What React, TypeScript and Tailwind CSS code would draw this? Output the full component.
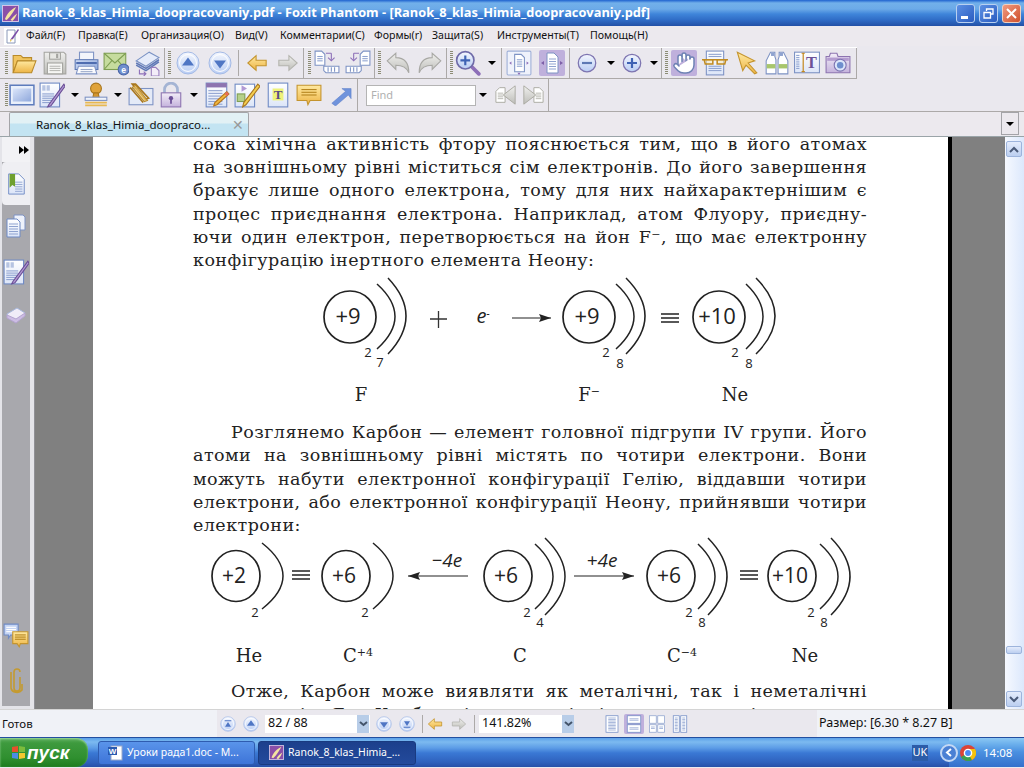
import type { ReactNode } from "react";
import { Hand } from "lucide-react";

const Ic = ({ s = 26, children }: { s?: number; children: ReactNode }) => (
  <svg width={s} height={s} viewBox="0 0 24 24" className="block shrink-0">{children}</svg>
);

const Defs = () => (
  <svg width="0" height="0" className="block h-0 w-0">
    <defs>
      <linearGradient id="amber" x1="0" y1="0" x2="0" y2="1"><stop offset="0" stopColor="#FFE9A0" /><stop offset="1" stopColor="#EDB445" /></linearGradient>
      <linearGradient id="ball" x1="0" y1="0" x2="0" y2="1"><stop offset="0" stopColor="#F4F7FE" /><stop offset="1" stopColor="#B9CDF4" /></linearGradient>
      <linearGradient id="blue" x1="0" y1="0" x2="1" y2="1"><stop offset="0" stopColor="#DCE6FA" /><stop offset="1" stopColor="#8FA8DC" /></linearGradient>
      <linearGradient id="doc" x1="0" y1="0" x2="0" y2="1"><stop offset="0" stopColor="#FFFFFF" /><stop offset="1" stopColor="#DCE5F8" /></linearGradient>
      <linearGradient id="grey" x1="0" y1="0" x2="0" y2="1"><stop offset="0" stopColor="#F0F0EE" /><stop offset="1" stopColor="#BDBDB8" /></linearGradient>
      <linearGradient id="lilac" x1="0" y1="0" x2="0" y2="1"><stop offset="0" stopColor="#F3EEF8" /><stop offset="1" stopColor="#C4B2DC" /></linearGradient>
    </defs>
  </svg>
);

const Lines = ({ x, y, w, n, c = "#8FA3D0", d = 2 }: { x: number; y: number; w: number; n: number; c?: string; d?: number }) => (
  <>
    {Array.from({ length: n }).map((_, i) => (
      <path key={i} d={`M${x} ${y + i * d}h${w}`} stroke={c} strokeWidth="1" />
    ))}
  </>
);

const Folder = () => (
  <Ic>
    <path d="M2 21V5h7l2 2h8v3H6L2 21z" fill="#F1C45F" stroke="#B98A2A" />
    <path d="M2 21l4-11h17l-4 11z" fill="url(#amber)" stroke="#B98A2A" />
  </Ic>
);
const Save = () => (
  <Ic>
    <path d="M2 2h18l2 2v18H2z" fill="url(#grey)" stroke="#A4A4A0" />
    <rect x="7" y="2.5" width="10" height="6" fill="#E8E8E4" stroke="#A4A4A0" />
    <rect x="13" y="3.5" width="2" height="4" fill="#A4A4A0" />
    <rect x="5" y="12" width="14" height="10" fill="#F6F6F4" stroke="#A4A4A0" />
    <Lines x={7} y={15} w={10} n={3} c="#B8B8B4" />
  </Ic>
);
const Printer = () => (
  <Ic>
    <rect x="6" y="2" width="13" height="7" fill="#F3F5FB" stroke="#7E93C4" />
    <path d="M2 9h21v9H2z" fill="url(#blue)" stroke="#5C78B4" />
    <path d="M3 12h19" stroke="#4E6CB0" strokeWidth="2" />
    <path d="M5 15h15l2 7H3z" fill="#FBFBFD" stroke="#7E93C4" />
    <Lines x={7} y={18} w={11} n={2} c="#9AA8C8" />
  </Ic>
);
const Mail = () => (
  <Ic>
    <rect x="1" y="3" width="20" height="15" fill="#C6DC9E" stroke="#7E9E52" />
    <path d="M1 3l10 9 10-9M1 18l7-8M21 18l-7-8" fill="none" stroke="#7E9E52" />
    <circle cx="19" cy="18" r="5" fill="#6F8FCE" stroke="#4A66A8" />
    <text x="19" y="21" fontSize="8" fontWeight="700" textAnchor="middle" fill="#fff" fontFamily="Liberation Sans, sans-serif">e</text>
  </Ic>
);
const Scan = () => (
  <Ic>
    <path d="M2 10L14 2l9 5-12 8z" fill="#E6ECFA" stroke="#7A92C4" />
    <path d="M2 12l9 5 12-8M2 14l9 5 12-8" fill="none" stroke="#5E78B6" strokeWidth="1.4" />
    <path d="M5 18v4h6M9 20l2 2-2 2" fill="none" stroke="#8D6FB8" />
    <path d="M16 16h4l3 3v5h-7z" fill="#F3EDF8" stroke="#9A80BE" />
  </Ic>
);
const Ball = ({ dir, small }: { dir: "up" | "down" | "first" | "last"; small?: boolean }) => (
  <Ic s={small ? 16 : 24}>
    <circle cx="12" cy="12" r="11" fill="url(#ball)" stroke="#A4BAE6" />
    <circle cx="12" cy="12" r="8.4" fill="none" stroke="#fff" />
    {dir === "up" && <path d="M12 6.5l6 8H6z" fill="#4F76C4" />}
    {dir === "down" && <path d="M12 17.5l6-8H6z" fill="#4F76C4" />}
    {dir === "first" && <path d="M7 6.5h10v1.5H7zM12 9l4.500 7h-9z" fill="#4F76C4" />}
    {dir === "last" && <path d="M7 16h10v1.500H7zM12 15l4.500-7h-9z" fill="#4F76C4" />}
  </Ic>
);
const ArrowH = ({ right, on, s = 22 }: { right?: boolean; on?: boolean; s?: number }) => (
  <Ic s={s}>
    <path
      d={right ? "M2 9h11V4l9 8-9 8v-5H2z" : "M22 9H11V4l-9 8 9 8v-5h11z"}
      fill={on ? "url(#amber)" : "url(#grey)"}
      stroke={on ? "#C4942E" : "#B4B4AE"}
      strokeWidth="1.2"
    />
  </Ic>
);
const FindNav = ({ right }: { right?: boolean }) => (
  <Ic s={22}>
    <g transform={right ? undefined : "translate(24 0) scale(-1 1)"}>
      <path d="M13 4h6l4 4v12H13z" fill="#fff" stroke="#A8A8A0" />
      <Lines x={15} y={10} w={6} n={4} c="#B4B4AC" />
      <path d="M2 2l13 10L2 22z" fill="url(#grey)" stroke="#A8A8A0" />
    </g>
  </Ic>
);
const Extract = ({ flip }: { flip?: boolean }) => (
  <Ic>
    <g transform={flip ? "translate(24 0) scale(-1 1)" : undefined}>
      <path d="M1 1h6l3 3v10H1z" fill="#fff" stroke="#7E93C4" />
      <Lines x={3} y={6} w={5} n={3} />
      <path d="M16 3v6M13 7l3 3 3-3M11 3h5" fill="none" stroke="#8D6FB8" />
      <path d="M9 15h14v6H11l-2-2z" fill="#fff" stroke="#7E93C4" />
      <path d="M13 16v4M16 16v4M19 16v4" stroke="#7E93C4" />
    </g>
  </Ic>
);
const Undo = ({ right }: { right?: boolean }) => (
  <Ic>
    <g transform={right ? "translate(24 0) scale(-1 1)" : undefined}>
      <path d="M2 10l8-7v4c8 0 12 5 12 14-2-5-6-7-12-7v4z" fill="url(#grey)" stroke="#A8A8A4" />
    </g>
  </Ic>
);
const ZoomIn = () => (
  <Ic>
    <path d="M15 15l7 7" stroke="#8D6FB8" strokeWidth="3.400" strokeLinecap="round" />
    <circle cx="9.500" cy="9.500" r="8" fill="url(#ball)" stroke="#6E6AA8" strokeWidth="1.500" />
    <path d="M5 9.500h9M9.500 5v9" stroke="#3E62B4" strokeWidth="2" />
  </Ic>
);
const FitPage = () => (
  <Ic>
    <rect x="1" y="1" width="22" height="22" rx="1" fill="#EFF2FB" stroke="#9FB0D8" />
    <path d="M8 4h6l3 3v13H8z" fill="#fff" stroke="#7E93C4" />
    <Lines x={10} y={9} w={5} n={4} />
    <path d="M3 12l2-1.500v3zM21 12l-2-1.500v3z" fill="#8D6FB8" />
    <path d="M12 23l-1.500-2h3z" fill="#8D6FB8" />
  </Ic>
);
const WidthPage = () => (
  <Ic s={24}>
    <path d="M7 2h7l4 4v16H7z" fill="#fff" stroke="#7E93C4" />
    <Lines x={9} y={8} w={7} n={5} d={2.500} />
    <path d="M1 12l3-2v4zM23 12l-3-2v4z" fill="#7D5FA8" />
  </Ic>
);
const RoundOp = ({ plus }: { plus?: boolean }) => (
  <Ic s={20}>
    <circle cx="12" cy="12" r="10.500" fill="url(#ball)" stroke="#7D74B0" strokeWidth="1.500" />
    <path d={plus ? "M6 12h12M12 6v12" : "M6 12h12"} stroke={plus ? "#3E62B4" : "#5C78B4"} strokeWidth="2.600" />
  </Ic>
);
const Glasses = () => (
  <Ic>
    <rect x="4" y="1" width="16" height="22" fill="url(#doc)" stroke="#7E93C4" />
    <Lines x={6} y={4} w={12} n={2} c="#8FA3D0" d={2} />
    <Lines x={6} y={15} w={12} n={3} c="#8FA3D0" d={2} />
    <path d="M0 9h24" stroke="#C08A1E" strokeWidth="1.400" />
    <path d="M2 9h8v4H3zM14 9h8l-1 4h-7z" fill="#F9E8B4" fillOpacity=".5" stroke="#C08A1E" strokeWidth="1.400" />
  </Ic>
);
const Pointer = () => (
  <Ic>
    <path d="M4 2l16 8-6 2 8 9-2 1-8-8-3 5z" fill="url(#amber)" stroke="#C4942E" />
  </Ic>
);
const Binoculars = () => (
  <Ic>
    <path d="M6 2h4v4l1 3v13H2V10z" fill="#fff" stroke="#7E93C4" />
    <path d="M14 2h4l4 8v12h-9V9l1-3z" fill="#fff" stroke="#7E93C4" />
    <rect x="2.500" y="13" width="8" height="4" fill="#A8C66C" />
    <rect x="13.500" y="13" width="8" height="4" fill="#A8C66C" />
    <rect x="6.500" y="2.500" width="3" height="3" fill="#8FA3D0" />
    <rect x="14.500" y="2.500" width="3" height="3" fill="#8FA3D0" />
  </Ic>
);
const TextSel = () => (
  <Ic>
    <rect x="0.500" y="2" width="23" height="19" fill="url(#doc)" stroke="#7E93C4" />
    <Lines x={2} y={5} w={3} n={7} d={2} />
    <path d="M7 3h3M7 20h3M8.500 3v17" stroke="#C4881E" strokeWidth="1.100" fill="none" />
    <text x="16" y="17" fontSize="15" fontWeight="700" textAnchor="middle" fill="#6D5296" fontFamily="Liberation Serif, serif">T</text>
  </Ic>
);
const Camera = () => (
  <Ic>
    <path d="M1 6h3l1-3h6l1 3h11v15H1z" fill="url(#lilac)" stroke="#8D74B0" />
    <rect x="2" y="7" width="20" height="3" fill="#B49CD0" />
    <circle cx="14" cy="14" r="5.500" fill="#DCE6FA" stroke="#7D74B0" />
    <circle cx="14" cy="14" r="3" fill="#6F8FCE" />
  </Ic>
);
const Screen = () => (
  <Ic>
    <rect x="1" y="3" width="22" height="18" fill="#EAF0FB" stroke="#5E7CBC" strokeWidth="1.400" />
    <rect x="3.500" y="6" width="17" height="12" fill="url(#blue)" />
  </Ic>
);
const DocPen = () => (
  <Ic>
    <rect x="1" y="1" width="18" height="22" fill="url(#doc)" stroke="#6F8AC4" />
    <rect x="3" y="3" width="3" height="5" fill="#B6C4E2" />
    <rect x="7" y="3" width="3" height="5" fill="#B6C4E2" />
    <Lines x={3} y={11} w={11} n={5} />
    <path d="M23 2L9 21l-1 2 3-1L24 4z" fill="#B29AD4" stroke="#6A4E96" />
  </Ic>
);
const Stamp = () => (
  <Ic>
    <circle cx="12" cy="6" r="5" fill="#E0A33A" stroke="#A8761E" />
    <path d="M10 10h4l1 5H9z" fill="#D4952E" stroke="#A8761E" />
    <rect x="2" y="14" width="20" height="3" fill="#F0F3FA" stroke="#7E93C4" />
    <path d="M2 19h20M2 21.500h20" stroke="#E8B850" strokeWidth="1.600" />
  </Ic>
);
const Clips = () => (
  <Ic>
    <rect x="1" y="6" width="22" height="15" fill="#E4EAF7" stroke="#7E93C4" />
    <path d="M4 2l12 14 3-1L7 2zM2 5l12 14" fill="none" stroke="#A8761E" strokeWidth="1.500" />
    <path d="M7 3l11 14-3 1L4 5z" fill="#F0C868" fillOpacity=".7" stroke="#B98A2A" />
  </Ic>
);
const Lock = () => (
  <Ic>
    <path d="M6 11V7a6 6 0 0112 0v4" fill="none" stroke="#A4B4D4" strokeWidth="2.500" />
    <rect x="3" y="10" width="18" height="13" fill="url(#lilac)" stroke="#8D74B0" />
    <circle cx="12" cy="15" r="2" fill="#6A4E96" />
    <path d="M12 16v4" stroke="#6A4E96" strokeWidth="1.600" />
  </Ic>
);
const Note = () => (
  <Ic>
    <rect x="2" y="1" width="19" height="22" fill="url(#doc)" stroke="#6F8AC4" />
    <rect x="2" y="1" width="19" height="4" fill="#8D74B0" />
    <Lines x={4} y={8} w={13} n={6} d={2.500} />
    <path d="M21 9l2 2-11 10-3 1 1-3z" fill="#F0B83C" stroke="#B4741E" />
    <path d="M21 9l2 2-2 2-2-2z" fill="#E86A5A" />
  </Ic>
);
const Form = () => (
  <Ic>
    <rect x="1" y="2" width="18" height="21" fill="url(#doc)" stroke="#6F8AC4" />
    <rect x="3" y="11" width="7" height="7" fill="#B6D08A" stroke="#7E9E52" />
    <path d="M7 3l5 3-5 3z" fill="#B29AD4" />
    <path d="M22 2l2 2-13 17-3 2 1-4z" fill="#F4CE4E" stroke="#A8761E" />
  </Ic>
);
const TDoc = () => (
  <Ic>
    <rect x="3" y="1" width="18" height="22" fill="url(#doc)" stroke="#6F8AC4" />
    <rect x="7" y="6" width="10" height="11" fill="#EEF27A" />
    <text x="12" y="16" fontSize="12" fontWeight="700" textAnchor="middle" fill="#5A4A86" fontFamily="Liberation Serif, serif">T</text>
  </Ic>
);
const Speech = ({ s = 26 }: { s?: number }) => (
  <Ic s={s}>
    <path d="M1 3h22v14H13l-2 4-1-4H1z" fill="url(#amber)" stroke="#C4942E" />
    <Lines x={5} y={7} w={14} n={3} c="#B4841E" d={2.500} />
  </Ic>
);
const BlueArrow = () => (
  <Ic s={22}>
    <path d="M2 21L17 8l-4-3h10v11l-3-4L6 24z" fill="#6F93DC" stroke="#5E7FC8" strokeWidth=".6" />
  </Ic>
);
const Gem = () => (
  <svg width="24" height="24" viewBox="0 0 24 24" className="block">
    <path d="M3 11l10-6 8 5-9 9-8-4z" fill="#F0ECF8" stroke="#A8B8DC" />
    <path d="M3 15l9 5 9-7v-3l-9 6-9-4z" fill="#CDBDE4" stroke="#B4A4D0" />
  </svg>
);
const Caret = () => (
  <svg width="8" height="4" viewBox="0 0 8 4" className="block"><path d="M0 0h8L4 4z" fill="#000" /></svg>
);
const Grip = () => <div className="h-[24px] w-[3px] shrink-0 bg-[repeating-linear-gradient(to_bottom,#8C8C74_0_1px,#EAE8EE_1px_2px)]" />;
const Sep = () => <div className="h-[26px] w-px bg-[#ACA9A8]" />;

const AppLogo = ({ s = 17 }: { s?: number }) => (
  <svg width={s} height={s} viewBox="0 0 18 18" className="block shrink-0">
    <rect x=".5" y=".5" width="17" height="17" fill="#8A4FA8" stroke="#D8C8E8" />
    <path d="M3 15C6 8 9 5 15 2 12 7 10 11 5 16zM9 16c2-3 4-5 7-7-1 3-3 6-5 8z" fill="#F4E4A0" />
  </svg>
);

const Chevron = () => (
  <div className="flex h-full w-[12px] items-center justify-center bg-[#B8CDE8]">
    <svg width="9" height="6" viewBox="0 0 9 6"><path d="M1 1l3.500 3L8 1" fill="none" stroke="#44546A" strokeWidth="2" /></svg>
  </div>
);

const TitleBar = () => (
  <div className="flex h-[26px] shrink-0 items-center bg-[linear-gradient(to_bottom,#1F62CF_0,#72B0EA_3px,#6CAAE8_9px,#3F85DA_14px,#2F6CC6_20px,#2250A6_100%)] pl-[2px]">
    <AppLogo />
    <span className="ml-[3px] font-['Open_Sans',sans-serif] text-[12.800px] font-bold whitespace-nowrap text-white">
      Ranok_8_klas_Himia_doopracovaniy.pdf - Foxit Phantom - [Ranok_8_klas_Himia_doopracovaniy.pdf]
    </span>
    <div className="ml-auto flex gap-[4px] pr-[3px]">
      <div className="flex h-[19px] w-[19px] items-end rounded-[3px] border border-[#B8D0F0] bg-[linear-gradient(135deg,#5C90E4,#2A5CC0)] pb-[3px] pl-[4px]"><div className="h-[3px] w-[7px] bg-white" /></div>
      <div className="flex h-[19px] w-[19px] items-center justify-center rounded-[3px] border border-[#B8D0F0] bg-[linear-gradient(135deg,#5C90E4,#2A5CC0)]">
        <svg width="11" height="11" viewBox="0 0 11 11"><path d="M3.500 3V1h6.500v5H8M1 4.500h6.500v5.500H1z" fill="none" stroke="#fff" strokeWidth="1.300" /></svg>
      </div>
      <div className="flex h-[19px] w-[19px] items-center justify-center rounded-[3px] border border-[#F0D0C0] bg-[linear-gradient(135deg,#F09A80,#D0502C)]">
        <svg width="11" height="11" viewBox="0 0 11 11"><path d="M1 1l9 9M10 1l-9 9" stroke="#fff" strokeWidth="2" /></svg>
      </div>
    </div>
  </div>
);

const MenuBar = () => (
  <div className="flex h-[20px] shrink-0 items-center bg-[#ECE9EE] pl-[4px] font-['Noto_Sans',sans-serif] text-[10.600px] text-[#111]">
    <div className="flex h-[17px] w-[16px] items-center justify-center bg-white">
      <svg width="15" height="16" viewBox="0 0 15 16"><path d="M2 2h8v13H2z" fill="#fff" stroke="#8A98B8" /><path d="M13 1L5 12l3-1 6-9z" fill="#7C4FA8" /><path d="M5 12l3-1-3 3z" fill="#E8C860" /></svg>
    </div>
    <span className="ml-[6px] w-[52px]">Файл(F)</span>
    <span className="w-[63px]">Правка(E)</span>
    <span className="w-[94px]">Организация(O)</span>
    <span className="w-[45px]">Вид(V)</span>
    <span className="w-[94px]">Комментарии(C)</span>
    <span className="w-[58px]">Формы(r)</span>
    <span className="w-[65px]">Защита(S)</span>
    <span className="w-[93px]">Инструменты(T)</span>
    <span>Помощь(H)</span>
  </div>
);

const ToolbarOne = () => (
  <div className="flex h-[33px] shrink-0 bg-[#EAE8EE] pt-[1px]">
    <div className="flex h-[32px] border-t border-t-white border-b border-b-[#ACA9A8] items-center">
      <div className="flex h-full w-[165px] items-center border-r border-[#ACA9A8] pl-[5px]">
        <Grip />
        <div className="flex w-[32px] justify-center"><Folder /></div>
        <div className="flex w-[30px] justify-center"><Save /></div>
        <div className="flex w-[31px] justify-center"><Printer /></div>
        <div className="flex w-[29px] justify-center"><Mail /></div>
        <div className="flex w-[34px] justify-center"><Scan /></div>
      </div>
      <div className="flex h-full w-[139px] items-center border-r border-[#ACA9A8] pl-[3px]">
        <Grip />
        <div className="flex w-[33px] justify-center"><Ball dir="up" /></div>
        <div className="flex w-[31px] justify-center"><Ball dir="down" /></div>
        <div className="flex w-[6px] justify-center"><Sep /></div>
        <div className="flex w-[31px] justify-center"><ArrowH on /></div>
        <div className="flex w-[31px] justify-center"><ArrowH right /></div>
      </div>
      <div className="flex h-full w-[71px] items-center border-r border-[#ACA9A8] pl-[4px]">
        <Grip />
        <div className="flex w-[31px] justify-center"><Extract /></div>
        <div className="flex w-[32px] justify-center"><Extract flip /></div>
      </div>
      <div className="flex h-full w-[72px] items-center border-r border-[#ACA9A8] pl-[3px]">
        <Grip />
        <div className="flex w-[33px] justify-center"><Undo /></div>
        <div className="flex w-[32px] justify-center"><Undo right /></div>
      </div>
      <div className="flex h-full w-[55px] items-center border-r border-[#ACA9A8] pl-[3px]">
        <Grip />
        <div className="flex w-[30px] justify-center"><ZoomIn /></div>
        <div className="flex w-[18px] justify-center"><Caret /></div>
      </div>
      <div className="flex h-full w-[68px] items-center border-r border-[#ACA9A8]">
        <div className="flex w-[33px] justify-center"><FitPage /></div>
        <div className="flex w-[34px] justify-center">
          <div className="flex h-[26px] w-[26px] items-center justify-center rounded-[2px] bg-[#BFB0DC]"><WidthPage /></div>
        </div>
      </div>
      <div className="flex h-full w-[92px] items-center border-r border-[#ACA9A8]">
        <div className="flex w-[34px] justify-center"><RoundOp /></div>
        <div className="flex w-[14px] justify-center"><Caret /></div>
        <div className="flex w-[28px] justify-center"><RoundOp plus /></div>
        <div className="flex w-[15px] justify-center"><Caret /></div>
      </div>
      <div className="flex h-full w-[195px] items-center border-r border-[#ACA9A8] pl-[3px]">
        <Grip />
        <div className="ml-[3px] flex h-[26px] w-[26px] items-center justify-center rounded-[2px] bg-[#BFB0DC]">
          <Hand size={24} fill="#fff" stroke="#6E82B4" strokeWidth={1.5} />
        </div>
        <div className="ml-[2px] flex w-[31px] justify-center"><Glasses /></div>
        <div className="flex w-[31px] justify-center"><Pointer /></div>
        <div className="flex w-[31px] justify-center"><Binoculars /></div>
        <div className="flex w-[30px] justify-center"><TextSel /></div>
        <div className="flex w-[32px] justify-center"><Camera /></div>
      </div>
    </div>
  </div>
);

const ToolbarTwo = () => (
  <div className="flex h-[33px] shrink-0 items-center border-b border-[#ACA9A8] bg-[#EAE8EE]">
    <div className="flex h-full w-[358px] items-center border-r border-[#ACA9A8] pl-[5px]">
      <Grip />
      <div className="flex w-[29px] justify-center"><Screen /></div>
      <div className="flex w-[30px] justify-center"><DocPen /></div>
      <div className="flex w-[16px] justify-center"><Caret /></div>
      <div className="flex w-[26px] justify-center"><Stamp /></div>
      <div className="flex w-[18px] justify-center"><Caret /></div>
      <div className="flex w-[28px] justify-center"><Clips /></div>
      <div className="flex w-[32px] justify-center"><Lock /></div>
      <div className="flex w-[16px] justify-center"><Caret /></div>
      <div className="flex w-[29px] justify-center"><Note /></div>
      <div className="flex w-[31px] justify-center"><Form /></div>
      <div className="flex w-[31px] justify-center"><TDoc /></div>
      <div className="flex w-[31px] justify-center"><Speech /></div>
      <div className="flex w-[33px] justify-center"><BlueArrow /></div>
    </div>
    <div className="flex h-full w-[191px] items-center border-r border-[#ACA9A8] pl-[8px]">
      <div className="flex h-[21px] w-[110px] items-center border border-[#B4B4B4] bg-white pl-[4px] font-['Noto_Sans',sans-serif] text-[11px] text-[#B0B0B0]">Find</div>
      <div className="ml-[3px] w-[8px]"><Caret /></div>
      <div className="ml-[8px]"><FindNav /></div>
      <div className="ml-[5px]"><FindNav right /></div>
    </div>
  </div>
);

const TabBar = () => (
  <div className="flex h-[25px] shrink-0 items-end border-b border-[#9AA4A8] bg-[#ECE9EE] pl-[9px]">
    <div className="relative flex h-[24px] w-[240px] items-center rounded-t-[2px] border border-b-0 border-[#A4A4A8] bg-[linear-gradient(to_bottom,#E2F1F5_0,#E2F1F5_10px,#C3E4F2_11px)] pl-[26px] font-['Noto_Sans',sans-serif] text-[11.500px] text-[#111]">
      Ranok_8_klas_Himia_doopraco...
      <span className="absolute right-[4px] top-[5px] text-[14px] leading-none text-[#999]">✕</span>
    </div>
    <div className="mb-[1px] ml-auto mr-[5px] flex h-[23px] w-[18px] items-center justify-center border border-[#A4A4A8]"><Caret /></div>
  </div>
);

const SideBar = () => (
  <div className="flex h-full w-[35px] shrink-0 flex-col border-r border-[#909096] bg-[#E4E4E9] pl-[2px] pr-[4px]">
    <div className="flex h-[25px] items-center justify-end pr-[1px] bg-[#F2F2F5]">
      <svg width="10" height="8" viewBox="0 0 10 8"><path d="M0 0l5 4-5 4zM5 0l5 4-5 4z" fill="#000" /></svg>
    </div>
    <div className="flex flex-1 flex-col items-center bg-[#A8A8AD]">
      <div className="flex h-[43px] w-full items-center justify-center rounded-l-[4px] bg-[#EFEFF3]">
        <Ic s={22}>
          <path d="M4 1h11l6 6v16H4z" fill="url(#doc)" stroke="#6F8AC4" />
          <Lines x={11} y={10} w={8} n={5} d={2.500} />
          <path d="M5 1h6v14l-3-2-3 3z" fill="#6FA030" />
        </Ic>
      </div>
      <div className="mt-[9px]">
        <Ic s={24}>
          <path d="M10 1h9l2 2v13H10z" fill="#EEF2FB" stroke="#7E93C4" />
          <path d="M3 5h10l3 3v15H3z" fill="url(#doc)" stroke="#6F8AC4" />
          <Lines x={5} y={10} w={9} n={5} d={2.500} />
        </Ic>
      </div>
      <div className="mt-[21px]"><DocPen /></div>
      <div className="mt-[18px]"><Gem /></div>
      <div className="mt-auto">
        <svg width="26" height="26" viewBox="0 0 24 24" className="block">
          <path d="M1 1h13v10H7l-2 3v-3H1z" fill="#C4D4F4" stroke="#6F8AC4" />
          <Lines x={3} y={4} w={9} n={3} c="#fff" />
          <path d="M9 8h14v11h-7l-1 3-2-3H9z" fill="url(#amber)" stroke="#C4942E" />
          <Lines x={11} y={11} w={10} n={3} c="#B4841E" />
        </svg>
      </div>
      <div className="mt-[19px] mb-[12px]">
        <svg width="16" height="26" viewBox="0 0 16 26" className="block"><path d="M12 9v11a3 3 0 01-6 0V4a3 3 0 016 0M3 4v16a6 5 0 0011 2v-6" fill="none" stroke="#C49A30" strokeWidth="1.600" /></svg>
      </div>
    </div>
    <div className="h-[3px]" />
  </div>
);

const Line = ({ children, last, indent }: { children: ReactNode; last?: boolean; indent?: boolean }) => (
  <div className={`${last ? "text-left" : "text-justify [text-align-last:justify]"} ${indent ? "pl-[38px]" : ""}`}>{children}</div>
);

type Shell = [number, number, number, number];

const Atom = ({ cx, cy, rx, ry, label, fs, shells, nums }: { cx: number; cy: number; rx: number; ry: number; label: string; fs: number; shells: Shell[]; nums: [number, number, string][] }) => (
  <g>
    <ellipse cx={cx} cy={cy} rx={rx} ry={ry} fill="none" stroke="#222" strokeWidth="1.700" />
    <text x={cx - 2} y={cy + 7} fontSize={fs} textAnchor="middle" fill="#222">{label}</text>
    {shells.map(([x, via, top, bot], i) => (
      <path key={i} d={`M${x} ${top}Q${2 * via - x} ${(top + bot) / 2} ${x} ${bot}`} fill="none" stroke="#222" strokeWidth="1.500" />
    ))}
    {nums.map(([x, y, n], i) => (
      <text key={i} x={x} y={y} fontSize="13" textAnchor="middle" fill="#222">{n}</text>
    ))}
  </g>
);

const Triple = ({ x, y }: { x: number; y: number }) => (
  <path d={`M${x - 9} ${y - 4}h18M${x - 9} ${y}h18M${x - 9} ${y + 4}h18`} stroke="#222" strokeWidth="1.300" />
);

const ArrowLine = ({ x1, x2, y }: { x1: number; x2: number; y: number }) => {
  const d = x2 > x1 ? -1 : 1;
  return (
    <g>
      <path d={`M${x1} ${y}H${x2}`} stroke="#222" strokeWidth="1.200" />
      <path d={`M${x2} ${y}l${d * 12} -4l${d * -2} 4l${d * 2} 4z`} fill="#222" />
    </g>
  );
};

const Label = ({ x, y, children }: { x: number; y: number; children: ReactNode }) => (
  <text x={x} y={y} fontSize="18" textAnchor="middle" fill="#222" fontFamily="DejaVu Serif, serif">{children}</text>
);

const DiagramOne = () => (
  <svg width="674" height="149" viewBox="193 273 674 149" className="block overflow-visible font-['Open_Sans',sans-serif] tracking-normal">
    <Atom cx={350} cy={318} rx={26} ry={26} label="+9" fs={22} shells={[[377, 395, 285, 350], [388, 406, 279, 355]]} nums={[[368, 358, "2"], [380, 368, "7"]]} />
    <path d="M430 320h17M438.500 312v17" stroke="#333" strokeWidth="1.300" />
    <text x="483" y="324" fontSize="20" fontStyle="italic" textAnchor="middle" fill="#222">e<tspan fontSize="10" dy="-6">-</tspan></text>
    <ArrowLine x1={512} x2={551} y={319} />
    <Atom cx={589} cy={318} rx={26} ry={26} label="+9" fs={22} shells={[[616, 634, 285, 350], [626, 645, 279, 355]]} nums={[[606, 358, "2"], [620, 369, "8"]]} />
    <Triple x={670} y={319} />
    <Atom cx={719} cy={318} rx={26} ry={26} label="+10" fs={22} shells={[[746, 763, 285, 350], [756, 775, 279, 355]]} nums={[[735, 358, "2"], [749, 369, "8"]]} />
    <Label x={361} y={402}>F</Label>
    <Label x={589} y={402}>F<tspan fontSize="11" dy="-6">−</tspan></Label>
    <Label x={735} y={402}>Ne</Label>
  </svg>
);

const DiagramTwo = () => (
  <svg width="674" height="143" viewBox="193 538 674 143" className="block overflow-visible font-['Open_Sans',sans-serif] tracking-normal">
    <Atom cx={236} cy={577} rx={24} ry={25.500} label="+2" fs={21} shells={[[262, 283, 544, 610]]} nums={[[255, 618, "2"]]} />
    <Triple x={301} y={576} />
    <Atom cx={346} cy={577} rx={24} ry={25.500} label="+6" fs={21} shells={[[373, 393, 544, 610]]} nums={[[365, 618, "2"]]} />
    <text x="447" y="568" fontSize="19" fontStyle="italic" textAnchor="middle" fill="#222">−4e</text>
    <ArrowLine x1={468} x2={408} y={577} />
    <Atom cx={508} cy={577} rx={24} ry={25.500} label="+6" fs={21} shells={[[535, 553, 545, 610], [545, 565, 539, 616]]} nums={[[527, 618, "2"], [540, 628, "4"]]} />
    <text x="602" y="568" fontSize="19" fontStyle="italic" textAnchor="middle" fill="#222">+4e</text>
    <ArrowLine x1={574} x2={634} y={577} />
    <Atom cx={671} cy={577} rx={24} ry={25.500} label="+6" fs={21} shells={[[698, 715, 545, 610], [708, 727, 539, 616]]} nums={[[689, 618, "2"], [702, 628, "8"]]} />
    <Triple x={749} y={576} />
    <Atom cx={792} cy={577} rx={24} ry={25.500} label="+10" fs={21} shells={[[820, 838, 545, 610], [831, 850, 539, 616]]} nums={[[811, 618, "2"], [824, 628, "8"]]} />
    <Label x={249} y={663}>He</Label>
    <Label x={358} y={663}>C<tspan fontSize="11" dy="-6">+4</tspan></Label>
    <Label x={520} y={663}>C</Label>
    <Label x={682} y={663}>C<tspan fontSize="11" dy="-6">−4</tspan></Label>
    <Label x={805} y={663}>Ne</Label>
  </svg>
);

const Page = () => (
  <div className="h-full w-[859px] shrink-0 overflow-hidden border-r-4 border-black bg-white pl-[100px] pr-[81px] font-['DejaVu_Serif',serif] text-[17.500px] leading-[23.200px] tracking-[0.450px] text-[#222]">
    <div className="-mt-[4px]">
      <Line>сока хімічна активність фтору пояснюється тим, що в його атомах</Line>
      <Line>на зовнішньому рівні міститься сім електронів. До його завершення</Line>
      <Line>бракує лише одного електрона, тому для них найхарактернішим є</Line>
      <Line>процес приєднання електрона. Наприклад, атом Флуору, приєдну-</Line>
      <Line>ючи один електрон, перетворюється на йон F⁻, що має електронну</Line>
      <Line last>конфігурацію інертного елемента Неону:</Line>
      <DiagramOne />
      <Line indent>Розглянемо Карбон — елемент головної підгрупи IV групи. Його</Line>
      <Line>атоми на зовнішньому рівні містять по чотири електрони. Вони</Line>
      <Line>можуть набути електронної конфігурації Гелію, віддавши чотири</Line>
      <Line>електрони, або електронної конфігурації Неону, прийнявши чотири</Line>
      <Line last>електрони:</Line>
      <DiagramTwo />
      <Line indent>Отже, Карбон може виявляти як металічні, так і неметалічні</Line>
      <Line>властивості. Як Карбон і неметалічні елементи, він утворює</Line>
    </div>
  </div>
);

const ScrollBtn = ({ up }: { up?: boolean }) => (
  <div className="flex h-[16px] w-[16px] items-center justify-center rounded-[2px] border border-[#9DB4DC] bg-[linear-gradient(to_bottom,#E4ECFC,#BCCFF0)]">
    <svg width="10" height="7" viewBox="0 0 10 7"><path d={up ? "M1 6l4-4 4 4" : "M1 1l4 4 4-4"} fill="none" stroke="#4A5A78" strokeWidth="2" /></svg>
  </div>
);

const Scrollbar = () => (
  <div className="flex h-full w-[19px] shrink-0 flex-col items-center bg-[linear-gradient(to_right,#F6F9FF,#DCE8FC)] pr-[1px] pb-[2px] pt-[4px]">
    <ScrollBtn up />
    <div className="mt-[489px] h-[8px] w-[16px] rounded-[2px] border border-[#9DB4DC] bg-[linear-gradient(to_bottom,#E4ECFC,#BCCFF0)]" />
    <div className="mt-auto"><ScrollBtn /></div>
  </div>
);

const StatusBar = () => (
  <div className="flex h-[28px] shrink-0 items-center border-t border-t-[#D4D4D4] bg-[#F0F2F7] font-['Noto_Sans',sans-serif] text-[11.500px] text-[#111]">
    <div className="w-[217px] pl-[2px]">Готов</div>
    <div className="flex h-full w-[600px] items-center bg-[#EAE8EE] pl-[3px]">
      <div className="flex w-[16px] justify-center"><Ball dir="first" small /></div>
      <div className="ml-[7px] flex w-[16px] justify-center"><Ball dir="up" small /></div>
      <div className="ml-[6px] flex h-[18px] w-[105px] items-center justify-between bg-white pl-[3px] text-[12.500px] pr-[1px]">82 / 88<Chevron /></div>
      <div className="ml-[6px] flex w-[16px] justify-center"><Ball dir="down" small /></div>
      <div className="ml-[7px] flex w-[16px] justify-center"><Ball dir="last" small /></div>
      <div className="ml-[7px] h-[18px] w-px bg-[#ACA9A8]" />
      <div className="ml-[4px]"><ArrowH on s={16} /></div>
      <div className="ml-[8px]"><ArrowH right s={16} /></div>
      <div className="ml-[7px] h-[18px] w-px bg-[#ACA9A8]" />
      <div className="ml-[4px] flex h-[18px] w-[95px] items-center justify-between bg-white pl-[3px] text-[12.500px]">141.82%<Chevron /></div>
      <div className="ml-[29px]">
        <Ic s={18}><rect x="4" y="1" width="16" height="22" fill="#fff" stroke="#6F8AC4" /><Lines x={7} y={4} w={10} n={9} /></Ic>
      </div>
      <div className="ml-[3px] flex h-[20px] w-[20px] items-center justify-center rounded-[2px] bg-[#BFB0DC]">
        <Ic s={18}><rect x="3" y="1" width="18" height="10" fill="#fff" stroke="#6F8AC4" /><rect x="3" y="13" width="18" height="10" fill="#fff" stroke="#6F8AC4" /><Lines x={6} y={5} w={12} n={2} /><Lines x={6} y={17} w={12} n={2} /></Ic>
      </div>
      <div className="ml-[4px]">
        <Ic s={18}><rect x="2" y="1" width="9" height="10" fill="#fff" stroke="#8FA3D0" /><rect x="13" y="1" width="9" height="10" fill="#fff" stroke="#8FA3D0" /><rect x="2" y="13" width="9" height="10" fill="#fff" stroke="#8FA3D0" /><rect x="13" y="13" width="9" height="10" fill="#fff" stroke="#8FA3D0" /><Lines x={4} y={16} w={5} n={2} /><Lines x={15} y={16} w={5} n={2} /></Ic>
      </div>
      <div className="ml-[5px]">
        <Ic s={18}><rect x="3" y="1" width="8" height="22" fill="#fff" stroke="#6F8AC4" /><rect x="13" y="1" width="8" height="22" fill="#fff" stroke="#6F8AC4" /><Lines x={5} y={4} w={4} n={9} /><Lines x={15} y={4} w={4} n={9} /></Ic>
      </div>
    </div>
    <div className="pl-[2px] text-[12.500px]">Размер: [6.30 * 8.27 B]</div>
  </div>
);

const Chrome = () => (
  <svg width="16" height="16" viewBox="0 0 16 16" className="block">
    <circle cx="8" cy="8" r="8" fill="#DB4437" />
    <path d="M8 8L1 12a8 8 0 0011 3z" fill="#3DA14F" />
    <path d="M8 8l4 7a8 8 0 003-11H8z" fill="#F4C20D" />
    <circle cx="8" cy="8" r="3.600" fill="#4A8AF4" stroke="#fff" strokeWidth="1.400" />
  </svg>
);

const TaskBar = () => (
  <div className="flex h-[30px] shrink-0 items-center overflow-hidden border-t border-[#234FA0] bg-[linear-gradient(to_bottom,#5CA0E8_0,#7CBAF0_4px,#5C9CE6_10px,#3A78D4_15px,#2F62BE_24px,#2750A8_100%)] font-['Noto_Sans',sans-serif] text-[10.500px] text-white">
    <div className="flex h-full w-[88px] shrink-0 items-center rounded-r-[12px] bg-[linear-gradient(to_bottom,#5FB05F_0,#3E9A3E_5px,#2F8F2F_20px,#1E7C1E_100%)] pl-[11px] shadow-[inset_0_1px_2px_#9CD89C]">
      <svg width="15" height="15" viewBox="0 0 15 15"><path d="M1 2l6-1v6H1z" fill="#E8502C" /><path d="M8 1l6 1v5H8z" fill="#7CBC3C" /><path d="M1 8h6v6l-6-1z" fill="#4C8CE4" /><path d="M8 8h6v5l-6 1z" fill="#F4C830" /></svg>
      <span className="ml-[1px] font-['Liberation_Sans',sans-serif] text-[19px] font-bold italic leading-none">пуск</span>
    </div>
    <div className="ml-[10px] flex h-[24px] w-[157px] items-center rounded-[3px] border border-[#2E5CB0] bg-[linear-gradient(to_bottom,#5A94EA,#3D74D8)] pl-[9px]">
      <svg width="15" height="16" viewBox="0 0 15 16" className="shrink-0"><rect x="3" y="1" width="11" height="14" fill="#fff" stroke="#9AA8C8" /><rect x="0" y="2" width="9" height="8" fill="#2A5AB0" /><text x="4.500" y="9" fontSize="8" fontWeight="700" fill="#fff" textAnchor="middle" fontFamily="Liberation Sans, sans-serif">W</text></svg>
      <span className="ml-[4px] whitespace-nowrap">Уроки рада1.doc - M...</span>
    </div>
    <div className="ml-[3px] flex h-[24px] w-[158px] items-center rounded-[3px] border border-[#193A80] bg-[linear-gradient(to_bottom,#1C3F8C,#234A9C)] pl-[10px]">
      <AppLogo s={15} />
      <span className="ml-[4px] whitespace-nowrap">Ranok_8_klas_Himia_...</span>
    </div>
    <div className="ml-[496px] flex h-[16px] w-[16px] items-center justify-center bg-[#2C5CA8] text-[11px]">UK</div>
    <div className="ml-[21px] flex h-full flex-1 items-center bg-[linear-gradient(to_bottom,#8CC8F4_0,#6CB0EC_6px,#4A90E0_14px,#3470CC_100%)]">
      <div className="-ml-[9px] flex h-[18px] w-[18px] items-center justify-center rounded-full border-2 border-[#C4D8F4] bg-[#4A80D4]">
        <svg width="8" height="9" viewBox="0 0 8 9"><path d="M6 1L2 4.500 6 8" fill="none" stroke="#fff" strokeWidth="2" /></svg>
      </div>
      <div className="ml-[2px]"><Chrome /></div>
      <span className="ml-[7px] text-[11.500px]">14:08</span>
    </div>
  </div>
);

export default function App() {
  return (
    <div className="flex h-[768px] w-[1024px] flex-col overflow-hidden bg-[#ECE9EE]">
      <Defs />
      <TitleBar />
      <MenuBar />
      <ToolbarOne />
      <ToolbarTwo />
      <TabBar />
      <div className="flex h-[572px] shrink-0">
        <SideBar />
        <div className="flex h-full w-[970px] bg-[#808080] pl-[58px]">
          <Page />
          <div className="w-[53px] shrink-0" />
        </div>
        <Scrollbar />
      </div>
      <StatusBar />
      <TaskBar />
    </div>
  );
}
